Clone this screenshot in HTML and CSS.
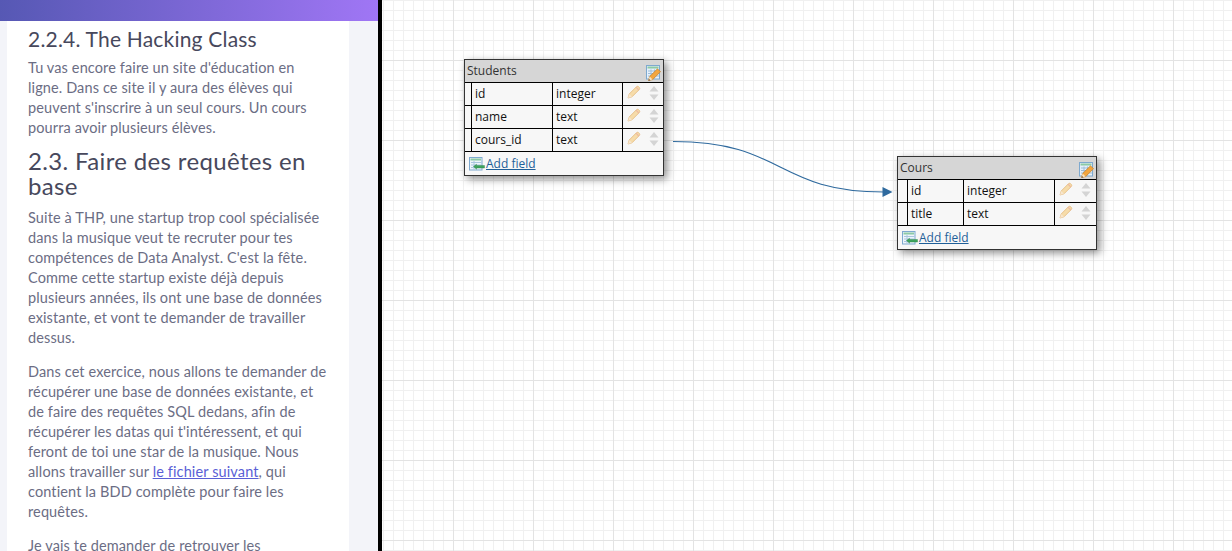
FILE: index.html
```html
<!DOCTYPE html>
<html lang="en">
<head>
  <meta charset="UTF-8">
  <title>Faire des requêtes en base</title>
  <link rel="stylesheet" href="styles.css">
</head>
<body>
  <svg class="sprites" width="0" height="0">
    <symbol id="icon-edit" viewBox="0 0 16 16">
      <rect x="1.500" y="0.500" width="13" height="13.500" fill="#e6f1fb" stroke="#7ea9cf"/>
      <rect x="2.500" y="1.500" width="11" height="2" fill="#8ccaa6"/>
      <path d="M3 6h11M3 8.500h11M3 11h11M6 4.500v9M9.500 4.500v9" stroke="#9dbdd9" fill="none"/>
      <path d="M3.500 15.500l1.200-4L12.500 3.800l3 3-7.800 7.700z" fill="#f2a63f" stroke="#c47c24" stroke-width="0.700"/>
      <path d="M3.500 15.500l1.200-4 2.900 2.900z" fill="#f8e2bd"/>
      <path d="M3.500 15.700l.5-1.800 1.300 1.300z" fill="#5a4632"/>
    </symbol>
    <symbol id="icon-pencil" viewBox="0 0 14 14">
      <path d="M1 13l1.200-4L9.500 1.700c.6-.6 1.500-.6 2.100 0l.7.700c.6.600.6 1.500 0 2.100L5 11.800z" fill="#f6dcaa" stroke="#e3b878" stroke-width="0.800"/>
      <path d="M1 13l1.200-4 2.800 2.800z" fill="#f7e6cf"/>
      <path d="M9 2.200l2.800 2.800" stroke="#eeb9a0" stroke-width="1.200"/>
    </symbol>
    <symbol id="icon-order" viewBox="0 0 10 16">
      <path d="M5 1l4.500 5.500h-9z" fill="#d4d4d4"/>
      <path d="M5 15L.5 9.500h9z" fill="#d4d4d4"/>
    </symbol>
    <symbol id="icon-add" viewBox="0 0 16 14">
      <rect x="0.500" y="0.500" width="12.500" height="12.500" fill="#eef5fb" stroke="#7ea9cf"/>
      <rect x="1.500" y="1.500" width="10.500" height="2" fill="#8ccaa6"/>
      <path d="M2 5.500h10.500M2 8h10.500M2 10.500h10.500M5 4v8.500" stroke="#a9c6df" fill="none"/>
      <path d="M4.500 9.500L7.500 7.300v1.200h8v2.500h-8v1.200z" fill="#3da35d" stroke="#2a8147" stroke-width="0.400"/>
    </symbol>
  </svg>

  <div class="app">
    <aside class="sidebar">
      <div class="topbar"></div>
      <article class="lesson">
        <h4>2.2.4. The Hacking Class</h4>
        <p>Tu vas encore faire un site d'éducation en<br>ligne. Dans ce site il y aura des élèves qui<br>peuvent s'inscrire à un seul cours. Un cours<br>pourra avoir plusieurs élèves.</p>
        <h3>2.3. Faire des requêtes en<br>base</h3>
        <p>Suite à THP, une startup trop cool spécialisée<br>dans la musique veut te recruter pour tes<br>compétences de Data Analyst. C'est la fête.<br>Comme cette startup existe déjà depuis<br>plusieurs années, ils ont une base de données<br>existante, et vont te demander de travailler<br>dessus.</p>
        <p>Dans cet exercice, nous allons te demander de<br>récupérer une base de données existante, et<br>de faire des requêtes SQL dedans, afin de<br>récupérer les datas qui t'intéressent, et qui<br>feront de toi une star de la musique. Nous<br>allons travailler sur <a href="#">le fichier suivant</a>, qui<br>contient la BDD complète pour faire les<br>requêtes.</p>
        <p>Je vais te demander de retrouver les</p>
      </article>
    </aside>

    <main class="canvas">
      <svg class="relation" width="850" height="551" viewBox="382 0 850 551">
        <path d="M673 141.500C785 141.500 775 192 884 192" fill="none" stroke="#2f6a9e" stroke-width="1.200"/>
        <path d="M882.500 187l10 5-10 5z" fill="#2f6a9e"/>
      </svg>

      <section class="entity entity-students">
        <header class="entity-title">
          <span>Students</span>
          <svg class="icon-edit"><use href="#icon-edit"/></svg>
        </header>
        <table>
          <tr>
            <td></td><td>id</td><td>integer</td>
            <td class="actions"><svg class="icon-pencil"><use href="#icon-pencil"/></svg><svg class="icon-order"><use href="#icon-order"/></svg></td>
          </tr>
          <tr>
            <td></td><td>name</td><td>text</td>
            <td class="actions"><svg class="icon-pencil"><use href="#icon-pencil"/></svg><svg class="icon-order"><use href="#icon-order"/></svg></td>
          </tr>
          <tr>
            <td></td><td>cours_id</td><td>text</td>
            <td class="actions"><svg class="icon-pencil"><use href="#icon-pencil"/></svg><svg class="icon-order"><use href="#icon-order"/></svg></td>
          </tr>
        </table>
        <footer class="entity-foot">
          <svg class="icon-add"><use href="#icon-add"/></svg>
          <a href="#">Add field</a>
        </footer>
      </section>

      <section class="entity entity-cours">
        <header class="entity-title">
          <span>Cours</span>
          <svg class="icon-edit"><use href="#icon-edit"/></svg>
        </header>
        <table>
          <tr>
            <td></td><td>id</td><td>integer</td>
            <td class="actions"><svg class="icon-pencil"><use href="#icon-pencil"/></svg><svg class="icon-order"><use href="#icon-order"/></svg></td>
          </tr>
          <tr>
            <td></td><td>title</td><td>text</td>
            <td class="actions"><svg class="icon-pencil"><use href="#icon-pencil"/></svg><svg class="icon-order"><use href="#icon-order"/></svg></td>
          </tr>
        </table>
        <footer class="entity-foot">
          <svg class="icon-add"><use href="#icon-add"/></svg>
          <a href="#">Add field</a>
        </footer>
      </section>
    </main>
  </div>
</body>
</html>
```

FILE: styles.css
```css
html, body {
  margin: 0;
  height: 100%;
  overflow: hidden;
}

.sprites {
  position: absolute;
}

.app {
  display: flex;
  height: 551px;
}

/* lesson panel */
.sidebar {
  width: 378px;
  flex: none;
  overflow: hidden;
  background: #f3f4f9;
  border-right: 4px solid #000;
  font-family: 'Lato', sans-serif;
}

.topbar {
  height: 21px;
  background: linear-gradient(to right, #5658b4, #a076f5);
}

.lesson {
  width: 300px;
  margin-left: 7px;
  padding: 5px 21px 0;
  background: #fff;
  color: #6b6d84;
  font-size: 14.5px;
  letter-spacing: 0.12px;
  line-height: 20px;
  white-space: nowrap;
}

.lesson h4 {
  margin: 0 0 6px;
  color: #47485c;
  font-size: 21px;
  font-weight: 400;
  letter-spacing: 0.2px;
  line-height: 26px;
}

.lesson h3 {
  margin: 0 0 10px;
  color: #47485c;
  font-size: 24px;
  font-weight: 400;
  letter-spacing: 0.35px;
  line-height: 25px;
}

.lesson p {
  margin: 0 0 14px;
}

.lesson h4 + p {
  margin-bottom: 10px;
}

.lesson a {
  color: #5a5fd6;
}

/* diagram */
.canvas {
  position: relative;
  flex: 1;
  background-color: #fff;
  background-image:
    linear-gradient(to right, #e3e3e3 1px, transparent 1px),
    linear-gradient(to bottom, #e3e3e3 1px, transparent 1px),
    linear-gradient(to right, #f0f0f0 1px, transparent 1px),
    linear-gradient(to bottom, #f0f0f0 1px, transparent 1px);
  background-size: 80px 80px, 80px 80px, 10px 10px, 10px 10px;
  background-position: 71px 0, 0 60px, 1px 0, 0 0;
}

.relation {
  position: absolute;
  left: 0;
  top: 0;
}

.entity {
  position: absolute;
  border: 1px solid #333;
  background: #f7f7f7;
  box-shadow: 3px 3px 8px rgba(0, 0, 0, 0.45);
  font-family: 'Open Sans', sans-serif;
  font-size: 12px;
  color: #111;
}

.entity-students {
  left: 82px;
  top: 59px;
  width: 198px;
}

.entity-cours {
  left: 515px;
  top: 156px;
  width: 198px;
}

.entity-title {
  display: flex;
  align-items: center;
  justify-content: space-between;
  height: 22px;
  padding: 0 2px;
  background: #d6d6d6;
  color: #333;
  line-height: 20px;
}

.entity-title span {
  margin-top: -1px;
}

.icon-edit {
  width: 16px;
  height: 16px;
  margin-top: 4px;
}

.entity table {
  width: 100%;
  table-layout: fixed;
  border-collapse: collapse;
  border-top: 1px solid #000;
}

.entity td {
  height: 22px;
  padding: 0 0 0 3px;
  border: 1px solid #000;
  border-top: 0;
  line-height: 22px;
}

.entity td:first-child {
  border-left: 0;
  padding: 0;
}

.entity td:last-child {
  border-right: 0;
}

.entity-students td:nth-child(1) { width: 6px; }
.entity-students td:nth-child(2) { width: 77px; }
.entity-students td:nth-child(3) { width: 66px; }

.entity-cours td:nth-child(1) { width: 9px; }
.entity-cours td:nth-child(2) { width: 52px; }
.entity-cours td:nth-child(3) { width: 87px; }

.entity td.actions {
  padding: 0;
}

.actions {
  white-space: nowrap;
}

.icon-pencil {
  width: 14px;
  height: 14px;
  margin-left: 4px;
  vertical-align: -1px;
}

.icon-order {
  width: 10px;
  height: 16px;
  margin-left: 8px;
  vertical-align: -3px;
}

.entity-foot {
  display: flex;
  align-items: center;
  gap: 1px;
  height: 23px;
  padding-left: 4px;
}

.icon-add {
  width: 16px;
  height: 14px;
}

.entity-foot a {
  color: #1f5f99;
}
```
